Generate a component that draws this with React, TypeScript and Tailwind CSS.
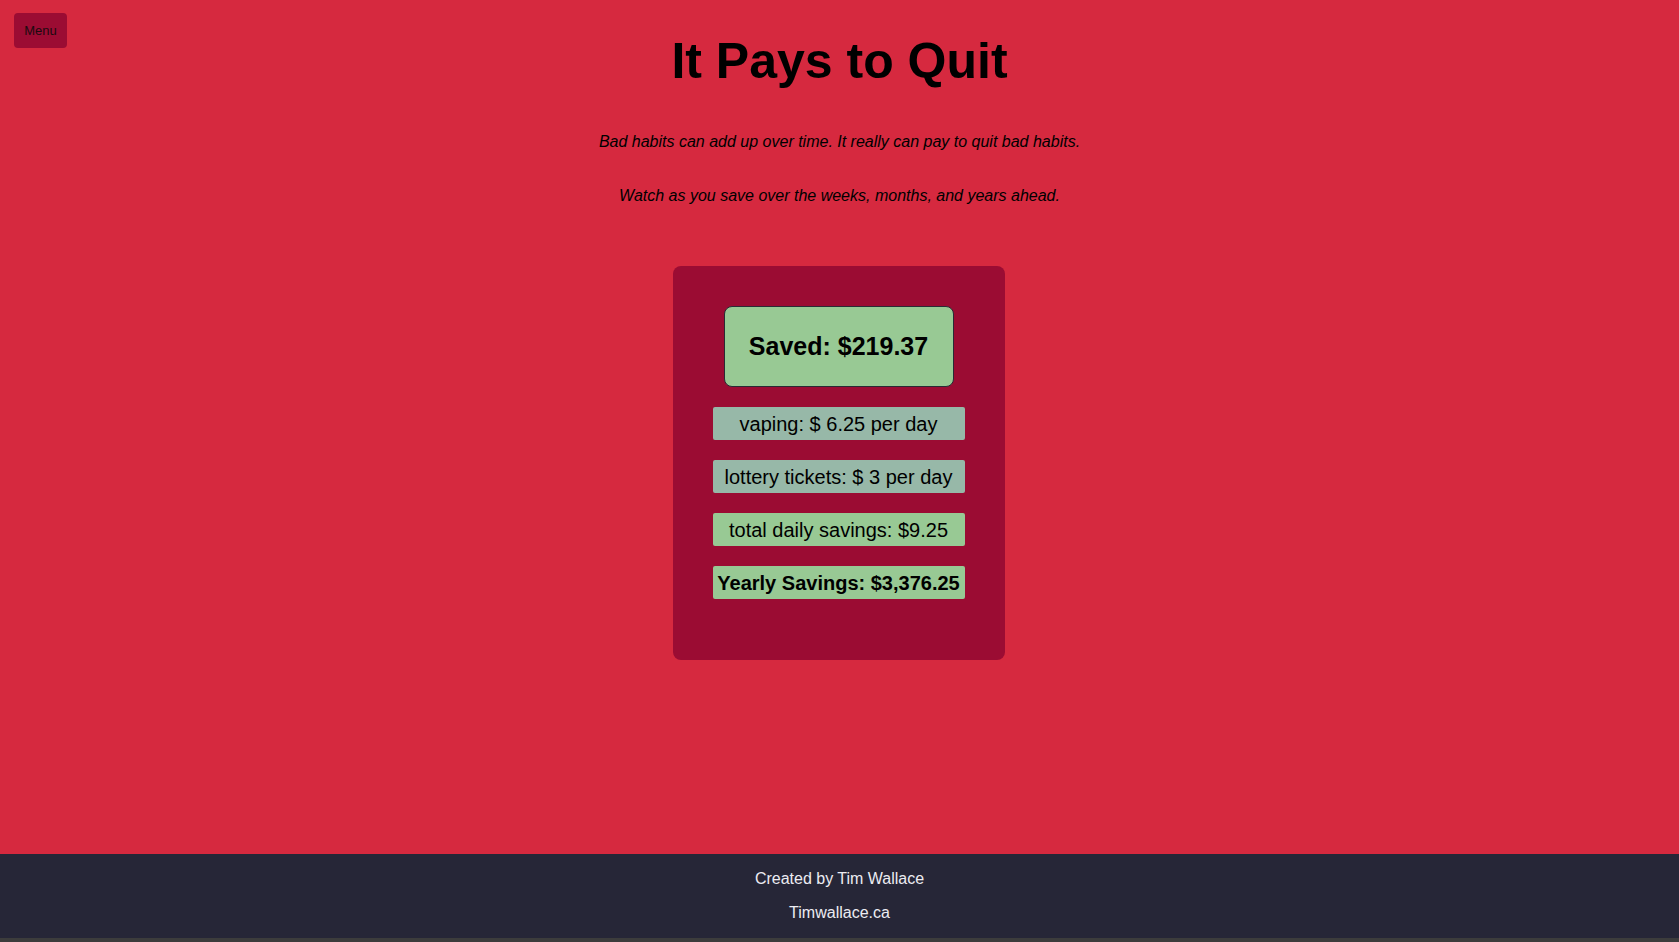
const habits = [
  { label: "vaping: $ 6.25 per day", bg: "bg-[#97b8a8]", bold: false },
  { label: "lottery tickets: $ 3 per day", bg: "bg-[#97b8a8]", bold: false },
  { label: "total daily savings: $9.25", bg: "bg-[#98c994]", bold: false },
  { label: "Yearly Savings: $3,376.25", bg: "bg-[#98c994]", bold: true },
];

export default function App() {
  return (
    <div className="min-h-[942px] bg-[#3c3c3c] font-['Liberation_Sans',Arial,sans-serif] text-black">
      <main className="relative h-[854px] bg-[#d6293f] flex flex-col items-center">
        <button className="absolute left-[14px] top-[13px] w-[53px] h-[35px] rounded-[4px] bg-[#9b0c33] text-[13px] text-[#1a0a10]">
          Menu
        </button>
        <h1 className="pt-[33px] text-[50px] leading-[57px] font-bold">It Pays to Quit</h1>
        <p className="mt-[43px] text-[16px] leading-[18px] italic">
          Bad habits can add up over time. It really can pay to quit bad habits.
        </p>
        <p className="mt-[36px] text-[16px] leading-[18px] italic">
          Watch as you save over the weeks, months, and years ahead.
        </p>
        <div className="mt-[61px] w-[332px] h-[394px] rounded-[8px] bg-[#9b0c33] flex flex-col items-center pt-[40px] -translate-x-[1px]">
          <div className="w-[230px] h-[81px] rounded-[8px] border border-[#2a2a35] bg-[#98c994] flex items-center justify-center">
            <h2 className="text-[25px] font-bold">Saved: $219.37</h2>
          </div>
          <div className="mt-[20px] flex flex-col gap-[20px]">
            {habits.map((h) => (
              <div
                key={h.label}
                className={`w-[252px] h-[33px] rounded-[2px] ${h.bg} flex items-center justify-center whitespace-nowrap text-[20px] leading-[22px] ${h.bold ? "font-bold" : ""}`}
              >
                {h.label}
              </div>
            ))}
          </div>
        </div>
      </main>
      <footer className="h-[84px] bg-[#262637] text-[#ececf2] text-[16px] flex flex-col items-center pt-[16px] gap-[16px]">
        <span className="leading-[18px]">Created by Tim Wallace</span>
        <span className="leading-[18px]">Timwallace.ca</span>
      </footer>
    </div>
  );
}
